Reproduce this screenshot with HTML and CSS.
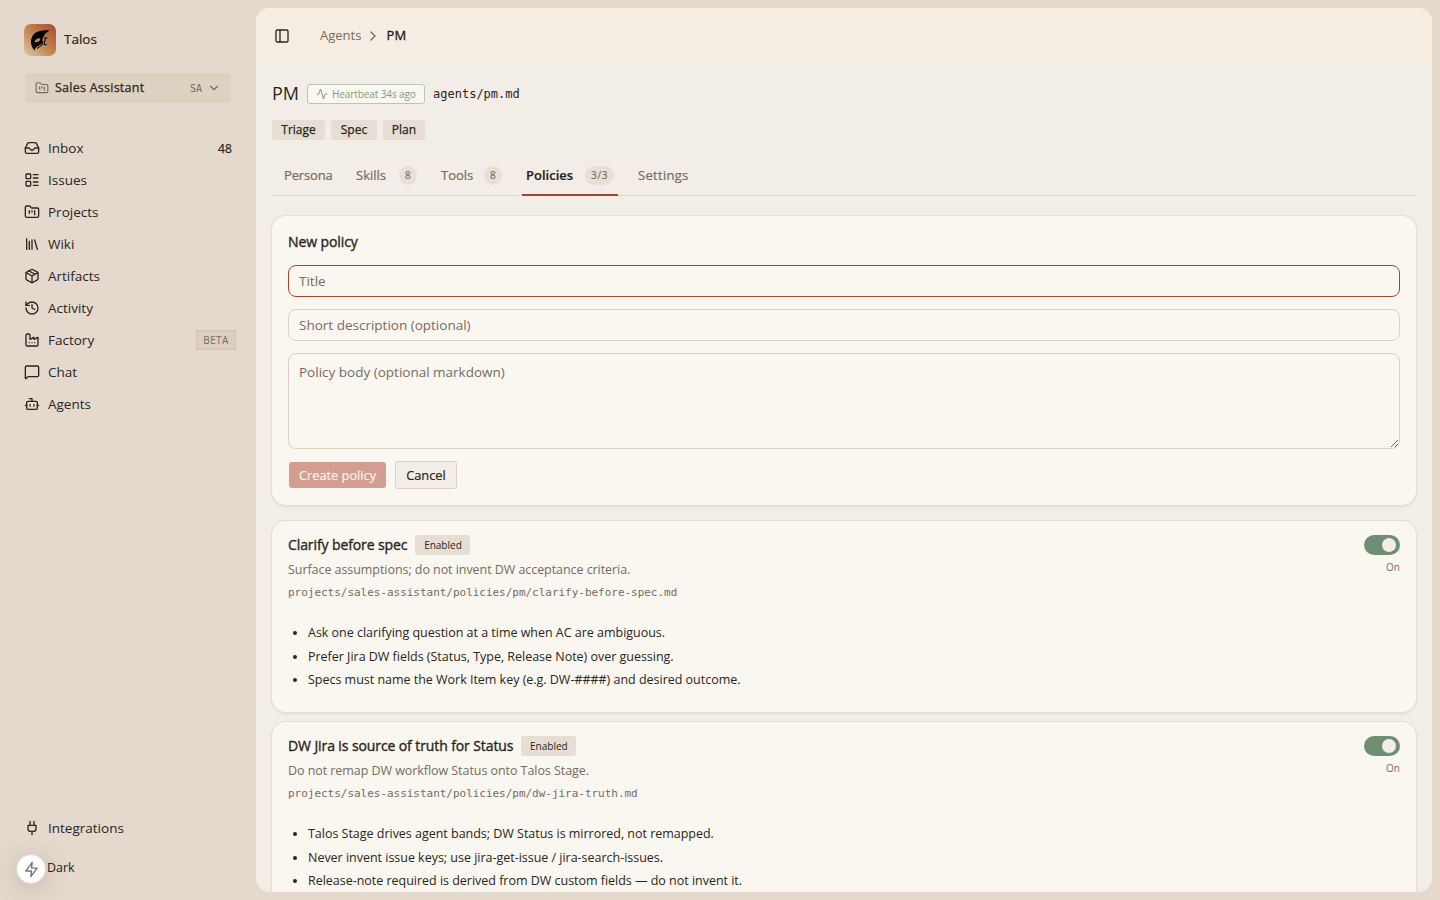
FILE: index.html
```
<!DOCTYPE html>
<html lang="en">
<head>
    <meta charset="UTF-8">
    <meta name="viewport" content="width=device-width, initial-scale=1.0">
    <title>PM - Talos</title>
    <link rel="stylesheet" href="styles.css">
</head>
<body>
    <aside class="sidebar">
        <div class="brand">
            <svg class="logo" viewBox="0 0 32 32">
                <defs>
                    <linearGradient id="logo-bg" x1="1" y1="0" x2="0" y2="1">
                        <stop offset="0" stop-color="#ae4630"/>
                        <stop offset="0.5" stop-color="#bf844b"/>
                        <stop offset="1" stop-color="#dfc6a8"/>
                    </linearGradient>
                </defs>
                <rect width="32" height="32" rx="7" fill="url(#logo-bg)"/>
                <path fill="#000" fill-rule="evenodd" d="M25.500 6.500C21 5.800 13 6.500 9.500 10.500C6 15 6 21 10.500 26.500C11.500 23.500 13 22.500 15 21.500C17 20.500 18 19.500 18.500 17.500C18.500 13 20.500 9.500 25.500 6.500ZM10.500 18C11.500 15 14 13.800 16.200 14.500C16.500 17 14 18.800 10.500 18Z"/>
                <path fill="none" stroke="#000" stroke-width="1" d="M21.500 14.500l-1.500 6h2.500M19 17l-1 4-5 3.500M20 14h3.500"/>
            </svg>
            <span class="brand-name">Talos</span>
        </div>
        <button class="project">
            <svg class="icon" viewBox="0 0 24 24"><path d="M4 20h16a2 2 0 0 0 2-2V8a2 2 0 0 0-2-2h-7.930a2 2 0 0 1-1.660-.9l-.820-1.200A2 2 0 0 0 7.930 3H4a2 2 0 0 0-2 2v13c0 1.100.9 2 2 2Z"/><path d="M8 10v4M12 10v2M16 10v6"/></svg>
            <span class="project-name">Sales Assistant</span>
            <span class="project-key">SA</span>
            <svg class="icon" viewBox="0 0 24 24"><path d="m6 9 6 6 6-6"/></svg>
        </button>
        <nav class="nav">
            <a class="nav-item"><svg class="icon" viewBox="0 0 24 24"><path d="M22 12h-6l-2 3h-4l-2-3H2"/><path d="M5.450 5.110 2 12v6a2 2 0 0 0 2 2h16a2 2 0 0 0 2-2v-6l-3.450-6.890A2 2 0 0 0 16.760 4H7.240a2 2 0 0 0-1.790 1.110z"/></svg><span>Inbox</span><span class="count">48</span></a>
            <a class="nav-item"><svg class="icon" viewBox="0 0 24 24"><rect x="3" y="3" width="7" height="7" rx="1"/><rect x="3" y="14" width="7" height="7" rx="1"/><path d="M14 4h7M14 9h7M14 15h7M14 20h7"/></svg><span>Issues</span></a>
            <a class="nav-item"><svg class="icon" viewBox="0 0 24 24"><path d="M4 20h16a2 2 0 0 0 2-2V8a2 2 0 0 0-2-2h-7.930a2 2 0 0 1-1.660-.9l-.820-1.200A2 2 0 0 0 7.930 3H4a2 2 0 0 0-2 2v13c0 1.100.9 2 2 2Z"/><path d="M8 10v4M12 10v2M16 10v6"/></svg><span>Projects</span></a>
            <a class="nav-item"><svg class="icon" viewBox="0 0 24 24"><path d="m16 6 4 14M12 6v14M8 8v12M4 4v16"/></svg><span>Wiki</span></a>
            <a class="nav-item"><svg class="icon" viewBox="0 0 24 24"><path d="M11 21.730a2 2 0 0 0 2 0l7-4A2 2 0 0 0 21 16V8a2 2 0 0 0-1-1.730l-7-4a2 2 0 0 0-2 0l-7 4A2 2 0 0 0 3 8v8a2 2 0 0 0 1 1.730z"/><path d="M12 22V12M3.290 7 12 12l8.710-5M7.500 4.270l9 5.150"/></svg><span>Artifacts</span></a>
            <a class="nav-item"><svg class="icon" viewBox="0 0 24 24"><path d="M3 12a9 9 0 1 0 9-9 9.750 9.750 0 0 0-6.740 2.740L3 8"/><path d="M3 3v5h5M12 7v5l4 2"/></svg><span>Activity</span></a>
            <a class="nav-item"><svg class="icon" viewBox="0 0 24 24"><path d="M12 16h.01M16 16h.01M8 16h.01"/><path d="M3 19a2 2 0 0 0 2 2h14a2 2 0 0 0 2-2V8.500a.5.5 0 0 0-.769-.422l-4.462 2.844A.5.5 0 0 1 15 10.500v-2a.5.5 0 0 0-.769-.422L9.770 10.922A.5.5 0 0 1 9 10.500V5a2 2 0 0 0-2-2H5a2 2 0 0 0-2 2z"/></svg><span>Factory</span><span class="beta">BETA</span></a>
            <a class="nav-item"><svg class="icon" viewBox="0 0 24 24"><path d="M22 17a2 2 0 0 1-2 2H6.828a2 2 0 0 0-1.414.586l-2.202 2.202A.71.71 0 0 1 2 21.286V5a2 2 0 0 1 2-2h16a2 2 0 0 1 2 2z"/></svg><span>Chat</span></a>
            <a class="nav-item"><svg class="icon" viewBox="0 0 24 24"><path d="M12 8V4H8"/><rect x="4" y="8" width="16" height="12" rx="2"/><path d="M2 14h2M20 14h2M15 13v2M9 13v2"/></svg><span>Agents</span></a>
        </nav>
        <div class="sidebar-footer">
            <a class="nav-item"><svg class="icon" viewBox="0 0 24 24"><path d="M12 22v-5M9 8V2M15 8V2M18 8v5a4 4 0 0 1-4 4h-4a4 4 0 0 1-4-4V8Z"/></svg><span>Integrations</span></a>
            <div class="theme">Dark</div>
        </div>
        <button class="bolt"><svg class="icon" viewBox="0 0 24 24"><path d="M13 2 4 14h8l-1 8 9-12h-8z"/></svg></button>
    </aside>

    <main class="main">
        <header class="topbar">
            <svg class="icon" viewBox="0 0 24 24"><rect x="3" y="3" width="18" height="18" rx="2"/><path d="M9 3v18"/></svg>
            <div class="crumbs">
                <span>Agents</span>
                <svg class="icon" viewBox="0 0 24 24"><path d="m9 18 6-6-6-6"/></svg>
                <span class="current">PM</span>
            </div>
        </header>
        <div class="content">
            <div class="title-row">
                <h1>PM</h1>
                <span class="heartbeat"><svg class="icon" viewBox="0 0 24 24"><path d="M22 12h-2.480a2 2 0 0 0-1.930 1.460l-2.350 8.360a.25.25 0 0 1-.480 0L9.240 2.180a.25.25 0 0 0-.480 0l-2.350 8.360A2 2 0 0 1 4.490 12H2"/></svg><span>Heartbeat 34s ago</span></span>
                <code class="file">agents/pm.md</code>
            </div>
            <div class="tags">
                <span class="tag triage">Triage</span>
                <span class="tag spec">Spec</span>
                <span class="tag plan">Plan</span>
            </div>
            <div class="tabs">
                <a class="tab persona">Persona</a>
                <a class="tab skills">Skills <span class="pill">8</span></a>
                <a class="tab tools">Tools <span class="pill">8</span></a>
                <a class="tab policies active">Policies <span class="pill">3/3</span></a>
                <a class="tab settings">Settings</a>
            </div>

            <form class="card new-policy">
                <h2>New policy</h2>
                <input class="focused" type="text" placeholder="Title">
                <input type="text" placeholder="Short description (optional)">
                <textarea placeholder="Policy body (optional markdown)"></textarea>
                <div class="actions">
                    <button type="button" class="create" disabled>Create policy</button>
                    <button type="button" class="cancel">Cancel</button>
                </div>
            </form>

            <section class="card policy">
                <div class="policy-head">
                    <h2>Clarify before spec</h2>
                    <span class="enabled">Enabled</span>
                    <div class="toggle"><span class="switch"></span><span>On</span></div>
                </div>
                <p class="summary">Surface assumptions; do not invent DW acceptance criteria.</p>
                <code class="path">projects/sales-assistant/policies/pm/clarify-before-spec.md</code>
                <ul>
                    <li>Ask one clarifying question at a time when AC are ambiguous.</li>
                    <li>Prefer Jira DW fields (Status, Type, Release Note) over guessing.</li>
                    <li>Specs must name the Work Item key (e.g. DW-####) and desired outcome.</li>
                </ul>
            </section>

            <section class="card policy">
                <div class="policy-head">
                    <h2>DW Jira is source of truth for Status</h2>
                    <span class="enabled">Enabled</span>
                    <div class="toggle"><span class="switch"></span><span>On</span></div>
                </div>
                <p class="summary">Do not remap DW workflow Status onto Talos Stage.</p>
                <code class="path">projects/sales-assistant/policies/pm/dw-jira-truth.md</code>
                <ul>
                    <li>Talos Stage drives agent bands; DW Status is mirrored, not remapped.</li>
                    <li>Never invent issue keys; use jira-get-issue / jira-search-issues.</li>
                    <li>Release-note required is derived from DW custom fields — do not invent it.</li>
                </ul>
            </section>
        </div>
    </main>
</body>
</html>
```
FILE: styles.css
```
* {
    box-sizing: border-box;
}

body {
    margin: 0;
    height: 900px;
    display: flex;
    overflow: hidden;
    background: #e5d9cd;
    color: #292521;
    font-family: "Open Sans", "Noto Sans", sans-serif;
    font-size: 13.500px;
}

h1, h2, p, ul {
    margin: 0;
}

button, input, textarea {
    font: inherit;
    color: inherit;
}

.icon {
    width: 16px;
    height: 16px;
    flex: none;
    fill: none;
    stroke: currentColor;
    stroke-width: 2;
    stroke-linecap: round;
    stroke-linejoin: round;
}

/* sidebar */
.sidebar {
    position: relative;
    width: 256px;
    padding: 24px 16px 16px;
    display: flex;
    flex-direction: column;
}

.brand {
    display: flex;
    align-items: center;
    gap: 8px;
    padding-left: 8px;
}

.logo {
    width: 32px;
    height: 32px;
}

.brand-name {
    padding-bottom: 2px;
    font-size: 13.500px;
    -webkit-text-stroke: 0.2px;
}

.project {
    display: flex;
    align-items: center;
    width: 206px;
    height: 30px;
    margin: 17px 0 0 9px;
    padding: 0 10px;
    border: 0;
    background: #ddd1c2;
    font-size: 12.500px;
}

.project .icon {
    width: 14px;
    height: 14px;
    color: #766b60;
}

.project-name {
    margin-left: 6px;
    padding-bottom: 1px;
    letter-spacing: 0.25px;
    -webkit-text-stroke: 0.25px;
}

.project-key {
    margin: 1px 5px 0 auto;
    color: #766b60;
    font: 10px "DejaVu Sans Mono", monospace;
}

.nav {
    margin-top: 29px;
}

.nav-item {
    display: flex;
    align-items: center;
    gap: 8px;
    height: 32px;
    padding-left: 8px;
}

.count {
    margin-left: auto;
    padding-right: 8px;
    font-size: 12px;
    letter-spacing: 0.2px;
    -webkit-text-stroke: 0.25px;
}

.beta {
    width: 40px;
    margin: 0 4px 0 auto;
    height: 20px;
    border: 1px solid #d1c4b5;
    background: #dbcfc1;
    color: #766b60;
    font-size: 10px;
    letter-spacing: 0.4px;
    line-height: 19px;
    text-align: center;
}

.sidebar-footer {
    margin-top: auto;
}

.theme {
    height: 32px;
    margin-top: 8px;
    padding-left: 31px;
    font-size: 12.500px;
    line-height: 31px;
}

/* floats over the corner of the sidebar */
.bolt {
    position: absolute;
    left: 16px;
    bottom: 16px;
    width: 30px;
    height: 30px;
    padding: 0;
    display: flex;
    align-items: center;
    justify-content: center;
    border: 1px solid #dcdcdc;
    border-radius: 50%;
    background: #fff;
    color: #777;
    box-shadow: 0 4px 24px rgba(60, 40, 20, 0.2);
}

.bolt .icon {
    width: 17px;
    height: 17px;
}

/* main panel */
.main {
    width: 1176px;
    height: 884px;
    margin-top: 8px;
    overflow: hidden;
    border-radius: 14px;
    background: #f2ede6;
}

.topbar {
    display: flex;
    align-items: center;
    height: 56px;
    padding: 0 18px;
    background: #f5ede1;
}

.crumbs {
    display: flex;
    align-items: center;
    gap: 4px;
    margin-left: 30px;
    color: #766b60;
    font-size: 13px;
}

.crumbs span {
    padding-bottom: 2px;
}

.crumbs .current {
    margin-left: 1px;
    color: #1c1917;
    letter-spacing: 0.3px;
    -webkit-text-stroke: 0.3px;
}

.content {
    padding: 18px 16px 0;
}

.title-row {
    display: flex;
    align-items: center;
    gap: 8px;
    height: 24px;
}

h1 {
    padding-bottom: 2px;
    font-size: 18px;
    font-weight: 400;
}

.heartbeat {
    display: flex;
    align-items: center;
    gap: 4px;
    width: 118px;
    height: 20px;
    padding-left: 8px;
    border: 1px solid #b5c8b8;
    border-radius: 3px;
    background: #faf7f0;
    color: #7d9c82;
    font-size: 10px;
    letter-spacing: -0.100px;
    white-space: nowrap;
}

.heartbeat .icon {
    width: 12px;
    height: 12px;
}

.file {
    font: 12px "DejaVu Sans Mono", monospace;
}

.tags {
    display: flex;
    gap: 6px;
    margin-top: 14px;
}

.tag {
    height: 20px;
    border-radius: 3px;
    background: #e7ded3;
    font-size: 12px;
    line-height: 20px;
    text-align: center;
    -webkit-text-stroke: 0.25px;
}

.triage {
    width: 53px;
}

.spec {
    width: 46px;
}

.plan {
    width: 42px;
}

.tabs {
    display: flex;
    height: 40px;
    margin-top: 16px;
    padding-left: 8px;
    border-bottom: 1px solid #dfd8cc;
    color: #766b60;
    font-size: 13px;
}

.tab {
    display: flex;
    align-items: center;
    justify-content: space-between;
    height: 40px;
    padding: 0 4px 2px;
    -webkit-text-stroke: 0.2px;
}

.persona {
    width: 56px;
    margin-right: 16px;
    letter-spacing: -0.150px;
}

.skills {
    width: 69px;
    margin-right: 16px;
}

.tools {
    width: 69px;
    margin-right: 16px;
}

.policies {
    width: 96px;
    margin-right: 16px;
}

.settings {
    letter-spacing: 0.3px;
}

.tab.active {
    border-bottom: 2px solid #a8432d;
    padding-bottom: 0;
    color: #292521;
    font-weight: 600;
}

.pill {
    min-width: 18px;
    height: 19px;
    padding: 0 6px;
    border-radius: 10px;
    background: #e9e0d5;
    color: #766b60;
    font-size: 10px;
    font-weight: 400;
    line-height: 19px;
}

.active .pill {
    letter-spacing: 0.600px;
}

.card {
    border-radius: 14px;
    background: #faf7f0;
    box-shadow: 0 0 0 1px #e4dfd5, 0 1px 3px rgba(60, 40, 20, 0.15);
}

.card h2 {
    font-size: 14px;
    font-weight: 400;
    letter-spacing: -0.100px;
    line-height: 20px;
    -webkit-text-stroke: 0.35px;
}

.new-policy {
    display: flex;
    flex-direction: column;
    gap: 12px;
    height: 289px;
    margin-top: 20px;
    padding: 16px;
}

.new-policy h2 {
    margin-bottom: 1px;
}

.new-policy input,
.new-policy textarea {
    width: 100%;
    height: 32px;
    padding: 0 10px;
    border: 1px solid #ded0c1;
    border-radius: 8px;
    outline: 0;
    background: transparent;
}

.new-policy textarea {
    height: 96px;
    padding-top: 8px;
    line-height: 20px;
}

.new-policy .focused {
    border-color: #a8432d;
}

::placeholder {
    color: #766b60;
}

.actions {
    display: flex;
    align-items: center;
    gap: 9px;
    height: 28px;
    padding-left: 1px;
}

.actions button {
    padding: 0 0 1px;
    border-radius: 3px;
    font-size: 12.800px;
    -webkit-text-stroke: 0.2px;
}

.actions .create {
    width: 97px;
    height: 26px;
    border: 0;
    background: #d39d8f;
    color: #faf3eb;
}

.actions .cancel {
    width: 62px;
    height: 28px;
    border: 1px solid #ded0c1;
    background: #f2ede6;
}

.policy {
    height: 191px;
    margin-top: 10px;
    padding: 14px 16px;
}

.new-policy + .policy {
    margin-top: 16px;
}

.policy-head {
    display: flex;
    align-items: flex-start;
    height: 20px;
}

.enabled {
    width: 55px;
    height: 20px;
    margin-left: 8px;
    border-radius: 3px;
    background: #e7ded3;
    font-size: 10px;
    line-height: 20px;
    text-align: center;
}

.toggle {
    display: flex;
    flex-direction: column;
    align-items: flex-end;
    gap: 5px;
    margin-left: auto;
    color: #766b60;
    font-size: 10px;
}

.switch {
    width: 36px;
    height: 20px;
    padding: 3px 4px 3px 18px;
    border-radius: 10px;
    background: #6e8f71;
}

.switch::after {
    content: "";
    display: block;
    width: 14px;
    height: 14px;
    border-radius: 50%;
    background: #f2ede6;
}

.summary {
    margin-top: 5px;
    color: #766b60;
    font-size: 12.500px;
    letter-spacing: -0.060px;
    line-height: 20px;
}

.path {
    display: block;
    margin-top: 5px;
    color: #766b60;
    font: 11px/16px "DejaVu Sans Mono", monospace;
    letter-spacing: -0.025px;
}

.policy ul {
    margin-top: 20px;
    padding-left: 20px;
    font-size: 12.500px;
    letter-spacing: -0.020px;
    line-height: 23.600px;
}
```
